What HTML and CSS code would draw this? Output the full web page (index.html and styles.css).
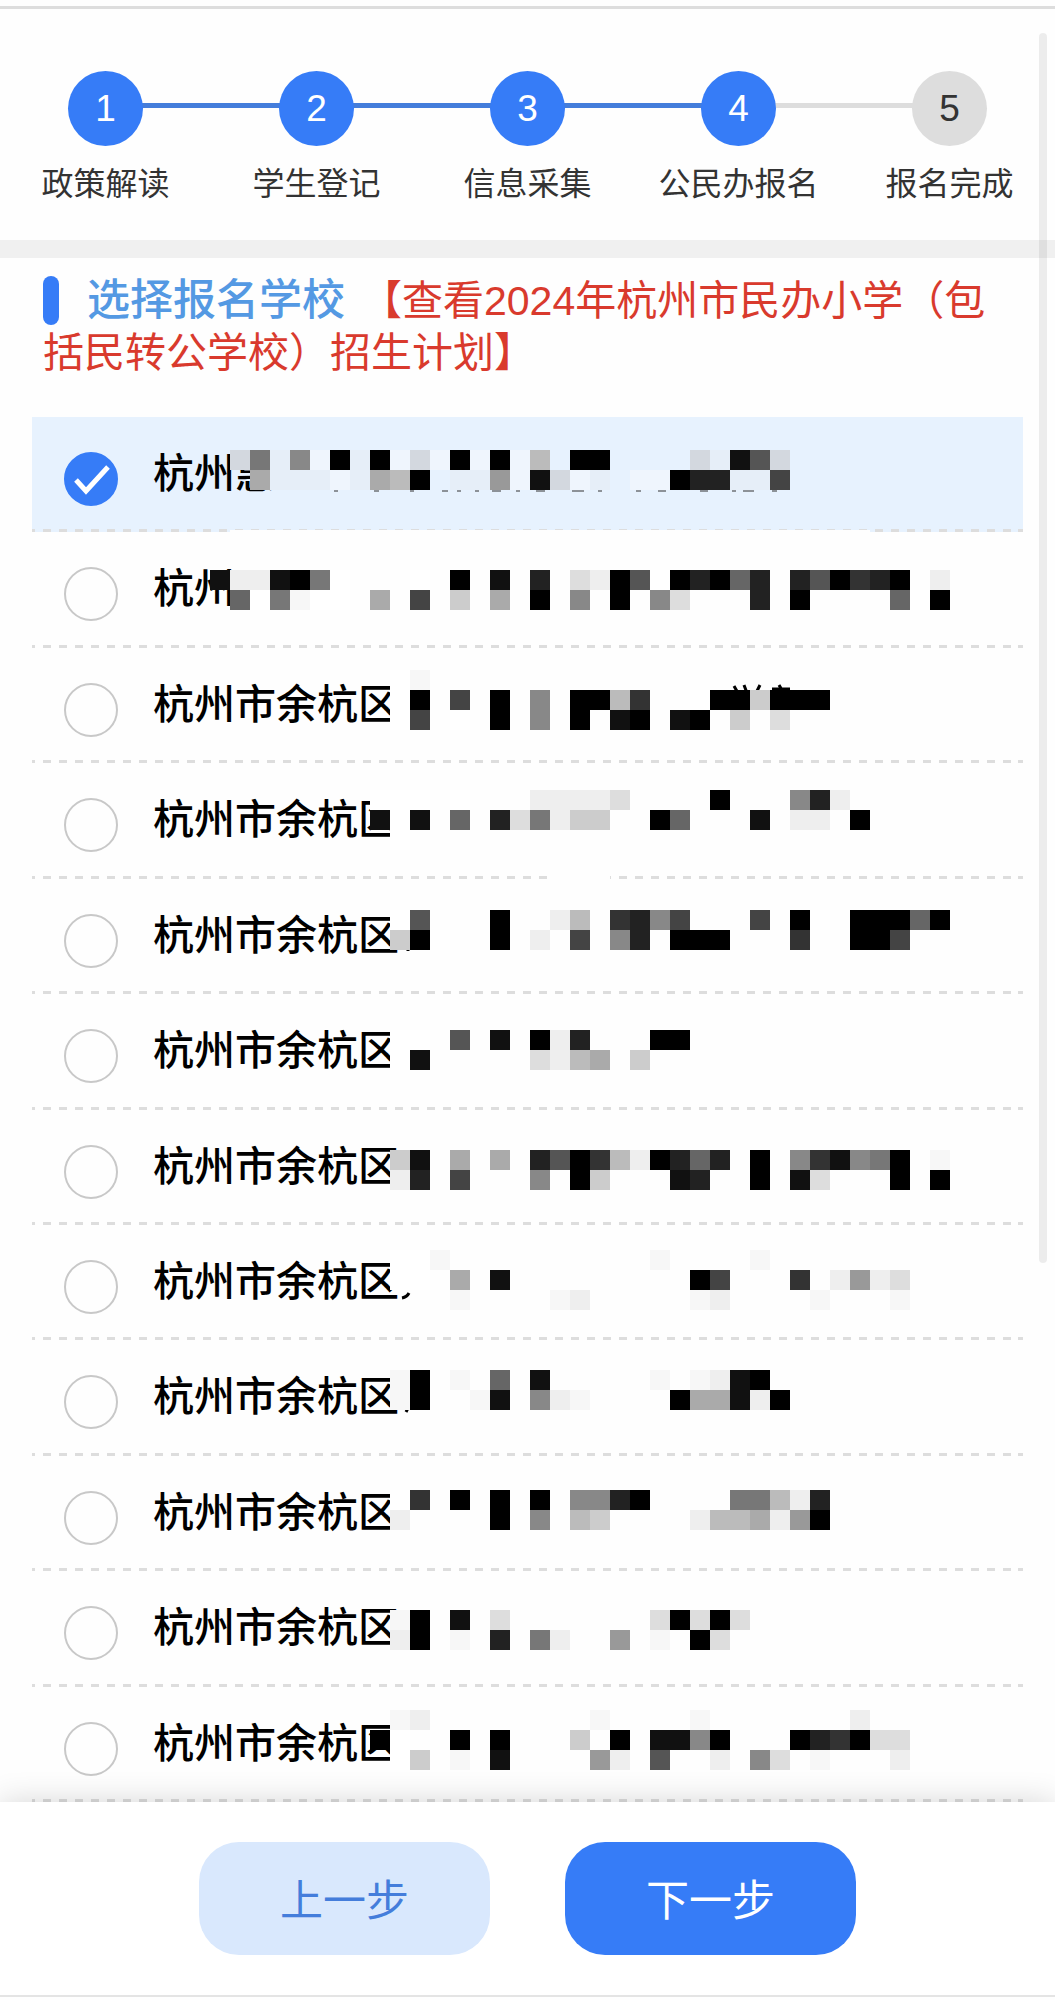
FILE: index.html
```html
<!DOCTYPE html>
<html lang="zh-CN">
<head>
  <meta charset="UTF-8" />
  <meta name="viewport" content="width=device-width, initial-scale=1.0"/>
  <title>公民办报名</title>
  <link rel="stylesheet" href="styles.css">
</head>
<body>
  <!-- Progress Steps -->
  <header class="header">
    <ol class="steps">
      <li class="step done"><span class="step-number">1</span><span class="step-label">政策解读</span></li>
      <li class="step done"><span class="step-number">2</span><span class="step-label">学生登记</span></li>
      <li class="step done"><span class="step-number">3</span><span class="step-label">信息采集</span></li>
      <li class="step current"><span class="step-number">4</span><span class="step-label">公民办报名</span></li>
      <li class="step"><span class="step-number">5</span><span class="step-label">报名完成</span></li>
    </ol>
  </header>

  <!-- School Selection -->
  <main class="content">
    <div class="title">
      <h1>选择报名学校</h1><a class="plan-link" href="#">【查看2024年杭州市民办小学（包括民转公学校）招生计划】</a>
    </div>

    <form class="school-list" id="schoolForm">
      <label class="school">
        <input type="radio" name="school" value="1" checked />
        <svg class="tick" viewBox="0 0 54 54" aria-hidden="true"><path d="M12 28 L22 39 L44 15" /></svg>
        <span class="school-name">杭州惠</span>
      </label>
      <label class="school">
        <input type="radio" name="school" value="2" />
        <span class="school-name">杭州</span>
      </label>
      <label class="school">
        <input type="radio" name="school" value="3" />
        <span class="school-name">杭州市余杭区</span>
      </label>
      <label class="school">
        <input type="radio" name="school" value="4" />
        <span class="school-name">杭州市余杭区</span>
      </label>
      <label class="school">
        <input type="radio" name="school" value="5" />
        <span class="school-name">杭州市余杭区</span>
      </label>
      <label class="school">
        <input type="radio" name="school" value="6" />
        <span class="school-name">杭州市余杭区</span>
      </label>
      <label class="school">
        <input type="radio" name="school" value="7" />
        <span class="school-name">杭州市余杭区</span>
      </label>
      <label class="school">
        <input type="radio" name="school" value="8" />
        <span class="school-name">杭州市余杭区</span>
      </label>
      <label class="school">
        <input type="radio" name="school" value="9" />
        <span class="school-name">杭州市余杭区</span>
      </label>
      <label class="school">
        <input type="radio" name="school" value="10" />
        <span class="school-name">杭州市余杭区</span>
      </label>
      <label class="school">
        <input type="radio" name="school" value="11" />
        <span class="school-name">杭州市余杭区</span>
      </label>
      <label class="school">
        <input type="radio" name="school" value="12" />
        <span class="school-name">杭州市余杭区</span>
      </label>

      <!-- Mosaic over the school names, filled in by mosaic.js -->
      <svg class="mosaic" id="mosaic" aria-hidden="true">
        <g class="gap">
          <rect x="198" y="113" width="640" height="5" />
          <rect x="518" y="457" width="60" height="5" />
        </g>
        <g class="stroke">
          <path d="M702 269 l4 7 M712 268 l3 8 M728 268 l-4 8 M740 272 h18 M747 268 l3 5" />
          <path d="M376 534 v-3 M374 995 l2 -4" />
          <path d="M370 881 q5 -1 7 -5" />
        </g>
        <g class="speck">
          <path d="M302 74 h4 M342 74 h5 M378 74 h4 M410 74 h6 M425 74 h4 M443 74 h4 M460 74 h9 M484 74 h4 M504 74 h9 M540 74 h12 M566 74 h4 M604 74 h5 M626 74 h8 M668 74 h8 M700 74 h4 M711 74 h11 M740 74 h5" />
        </g>
      </svg>
    </form>
  </main>

  <!-- Bottom Buttons -->
  <footer class="footer">
    <button type="button" class="btn btn-prev">上一步</button>
    <button type="submit" form="schoolForm" class="btn btn-next">下一步</button>
  </footer>

  <div class="scrollbar"></div>

  <script src="mosaic.js"></script>
</body>
</html>
```

FILE: styles.css
```css
/* General Styles */
* {
  box-sizing: border-box;
}

body {
  font-family: "Liberation Sans", "Noto Sans CJK SC", sans-serif;
  margin: 0;
  padding-top: 6px;
  min-height: 100vh;
  display: flex;
  flex-direction: column;
  position: relative;
  background-color: #fefefe;
  color: #333333;
}

/* Progress Steps */
.header {
  border-top: 3px solid #dddddd;
  border-bottom: 18px solid #f0f0f0;
  padding: 62px 0 36px;
}

.steps {
  display: flex;
  list-style: none;
  margin: 0;
  padding: 0;
}

.step {
  flex: 1;
  display: flex;
  flex-direction: column;
  align-items: center;
  gap: 18px;
  position: relative;
}

/* Line running to the next step */
.step:not(:last-child)::after {
  content: "";
  position: absolute;
  top: 32px;
  left: 50%;
  width: 100%;
  height: 5px;
  background-color: #dddddd;
}

.step.done:not(:last-child)::after {
  background-color: #447ddb;
}

.step-number {
  width: 75px;
  height: 75px;
  border-radius: 50%;
  background-color: #dddddd;
  font-size: 37px;
  line-height: 75px;
  text-align: center;
  position: relative;
  z-index: 1;
}

.done .step-number,
.current .step-number {
  background-color: #367cf7;
  color: #ffffff;
}

.step-label {
  font-size: 32px;
  line-height: 40px;
  white-space: nowrap;
}

/* School Selection */
.content {
  flex: 1;
  display: flex;
  flex-direction: column;
  padding: 16px 32px 0;
}

.title {
  padding: 0 11px;
  margin-bottom: 38px;
  font-size: 41px;
  line-height: 52px;
}

.title h1 {
  display: inline;
  margin: 0 16px 0 0;
  font-size: 43px;
  font-weight: 500;
  color: #5499e3;
}

.title h1::before {
  content: "";
  display: inline-block;
  width: 16px;
  height: 49px;
  margin-right: 28px;
  border-radius: 8px;
  background-color: #367cf7;
  vertical-align: -10px;
}

.plan-link {
  color: #d93a2d;
  text-decoration: none;
}

.school-list {
  flex: 1;
  display: flex;
  flex-direction: column;
  position: relative;
}

.school {
  flex: 1;
  display: grid;
  grid-template-columns: 54px 1fr;
  column-gap: 35px;
  align-items: start;
  padding: 35px 32px 0;
  /* Dashed line under each school */
  background: repeating-linear-gradient(90deg, #dddddd 0 8px, transparent 8px 16px) -5px 100% / 100% 3px repeat-x;
}

.school:has(input:checked) {
  background-color: #e7f2fe;
}

.school input {
  appearance: none;
  grid-area: 1 / 1;
  width: 54px;
  height: 54px;
  margin: 0;
  border: 2px solid #c8c8c8;
  border-radius: 50%;
}

.school input:checked {
  border-color: #367cf7;
  background-color: #367cf7;
}

.tick {
  grid-area: 1 / 1;
  width: 54px;
  height: 54px;
  fill: none;
  stroke: #ffffff;
  stroke-width: 5;
}

.school-name {
  grid-area: 1 / 2;
  font-size: 41px;
  font-weight: 500;
  line-height: 44px;
  color: #000000;
}

/* Mosaic over the names */
.mosaic {
  position: absolute;
  top: 0;
  left: 0;
  width: 100%;
  height: 100%;
  pointer-events: none;
}

.mosaic .gap {
  fill: #fefefe;
}

.mosaic .stroke {
  fill: none;
  stroke: #000000;
  stroke-width: 3;
}

.mosaic .speck {
  stroke: #333333;
  stroke-width: 1;
}

/* Bottom Buttons */
.footer {
  display: flex;
  justify-content: center;
  gap: 75px;
  margin-bottom: 3px;
  padding: 40px 32px;
  border-bottom: 2px solid #e4e4e4;
  background-color: #ffffff;
  box-shadow: 0 0 30px rgba(0, 0, 0, 0.16);
  clip-path: inset(-40px 0 0 0);
}

.btn {
  width: 291px;
  height: 113px;
  padding: 0 0 4px;
  border: none;
  border-radius: 40px;
  font-family: inherit;
  font-size: 43px;
  cursor: pointer;
}

.btn-prev {
  background-color: #d9e8fd;
  color: #447ddb;
}

.btn-next {
  background-color: #367cf7;
  color: #ffffff;
}

/* Scroll position indicator */
.scrollbar {
  position: absolute;
  top: 33px;
  right: 8px;
  width: 8px;
  height: 1230px;
  border-radius: 4px;
  background-color: rgba(0, 0, 0, 0.07);
}
```

FILE: mosaic.js
```js
// Each entry: [grid row, first grid column, shades]
// 0-f = black to white, . = nothing drawn, other letters are in TINTS
const CELL = 20;
const OFFSET_X = -22;
const OFFSET_Y = -407;

const TINTS = {
  g: '#f7f7f7',
  h: '#eff5fd',
  i: '#e6eef8',
  j: '#d3d8df'
};

const rows = [
  [22, 11, 'j7i8h0i0hjh0h0hb.00....ji15j'],
  [23, 11, '.aiiihiab0.ii9h1jhi.hh022ii4'],
  [28, 10, '1ee107f...f.0.1.2.de05f02062.250320.e'],
  [29, 11, '6f7gff.a.4.c.a.0.8.0.8d...2.0....6f0'],
  [33, 19, 'fg'],
  [34, 19, 'f0.4.0.8.00b3..f00c000'],
  [35, 19, 'f4.f.0.8.0.10.10.c.d'],
  [39, 18, 'fff.f...eeeed....0...82e'],
  [40, 18, '1f1.6.2d7ecc..06...1.ee.0'],
  [41, 19, 'f'],
  [45, 19, 'f5...0..eb.3284...4.0f.00060'],
  [46, 19, 'c0f..0.e.4.82.000...3..004'],
  [51, 19, 'ff.5.1.0e2...00'],
  [52, 19, 'f1.....deba.c'],
  [57, 19, 'c1.a.a.2503be0262.0.831870.g'],
  [58, 19, 'e2.4...8.0c...12..0.1d...0.0'],
  [62, 19, 'ffg..........g....g'],
  [63, 19, 'ff.a.1.........04...3.e9ed'],
  [64, 22, 'g....ge.....ge....g...g'],
  [68, 19, 'g0.g.6.1.....g.ge10'],
  [69, 19, 'g0..g1.8eg....0aa1e0'],
  [74, 19, 'f3.0.0.0.8820....77be2'],
  [75, 19, 'e....0.8.bc....ebbae90'],
  [80, 19, 'g0.1.d.......d0d0d'],
  [81, 19, 'e0.g.2.7e..9.g.0d'],
  [85, 19, 'ge........g....g.......e'],
  [86, 18, '0f..0.0...c.0.1180...0230dd'],
  [87, 19, 'fc.g.1....9e.5..e.8d.g...e']
];

const mosaic = document.getElementById('mosaic');

rows.forEach(([row, col, shades]) => {
  [...shades].forEach((shade, i) => {
    if (shade === '.') return;
    const rect = document.createElementNS('http://www.w3.org/2000/svg', 'rect');
    rect.setAttribute('x', (col + i) * CELL + OFFSET_X);
    rect.setAttribute('y', row * CELL + OFFSET_Y);
    rect.setAttribute('width', CELL);
    rect.setAttribute('height', CELL);
    rect.setAttribute('fill', TINTS[shade] || '#' + shade.repeat(3));
    mosaic.appendChild(rect);
  });
});
```
